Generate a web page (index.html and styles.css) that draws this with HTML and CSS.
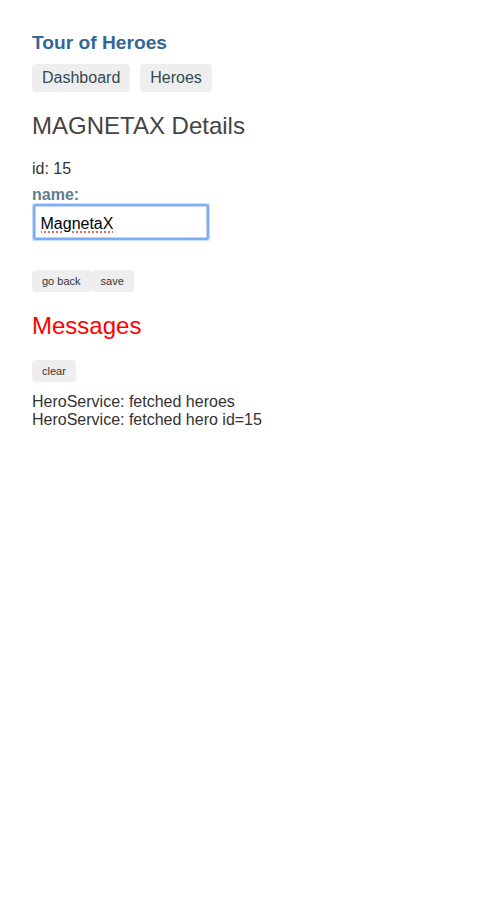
FILE: index.html
```html
<!DOCTYPE html>
<html>
<head>
<meta charset="utf-8">
<title>Tour of Heroes</title>
<link rel="stylesheet" href="styles.css">
</head>
<body>
  <h1 class="app-title">Tour of Heroes</h1>
  <nav class="app-nav">
    <a href="#" class="nav-link">Dashboard</a>
    <a href="#" class="nav-link">Heroes</a>
  </nav>
  <section class="hero-detail">
    <h2 class="detail-title">MAGNETAX Details</h2>
    <div class="hero-id">id: 15</div>
    <label class="name-label" for="hero-name">name:</label>
    <input id="hero-name" class="name-input" type="text" value="MagnetaX">
    <div class="actions">
      <button class="btn">go back</button><button class="btn">save</button>
    </div>
  </section>
  <section class="messages">
    <h2 class="messages-title">Messages</h2>
    <button class="btn btn-clear">clear</button>
    <div class="message">HeroService: fetched heroes</div>
    <div class="message">HeroService: fetched hero id=15</div>
  </section>
</body>
</html>
```
FILE: styles.css
```css
html, body {
  background: #fff;
}
body {
  margin: 32px;
  font-family: "Liberation Sans", Arial, sans-serif;
  font-size: 16px;
  color: #333;
}
.app-title {
  margin: 0;
  font-size: 19.2px;
  font-weight: bold;
  color: #369;
}
.app-nav {
  display: flex;
  gap: 10px;
  margin-top: 10px;
}
.nav-link {
  display: inline-block;
  padding: 5px 10px;
  background: #eee;
  border-radius: 4px;
  color: #334953;
  text-decoration: none;
  font-size: 16px;
}
.detail-title,
.messages-title {
  margin: 20px 0;
  font-size: 24px;
  font-weight: normal;
  color: #444;
}
.messages-title {
  color: #f00;
}
.hero-id {
  color: #333;
}
.name-label {
  display: block;
  margin-top: 8px;
  line-height: 17px;
  font-weight: bold;
  color: #607d8b;
}
.name-input {
  display: block;
  box-sizing: border-box;
  width: 172px;
  height: 32px;
  margin: 3px;
  padding: 4px 0 0 4.5px;
  border: 1px solid #c3d3e8;
  border-radius: 1px;
  font-family: "Liberation Sans", Arial, sans-serif;
  font-size: 16px;
  color: #000;
  outline: none;
  box-shadow: 0 0 0 2px #7dadf6, 0 0 1px 3px rgba(125, 173, 246, 0.45);
  text-decoration: underline dotted #e0443a;
  text-underline-offset: 3px;
}
.actions {
  display: flex;
  margin-top: 32px;
}
.btn {
  padding: 5px 10px;
  border: none;
  border-radius: 4px;
  background: #eee;
  color: #333;
  font-family: "Liberation Sans", Arial, sans-serif;
  font-size: 11px;
  line-height: 12px;
  cursor: pointer;
}
.btn-clear {
  display: block;
  margin-bottom: 11px;
}
.message {
  color: #333;
}
```
